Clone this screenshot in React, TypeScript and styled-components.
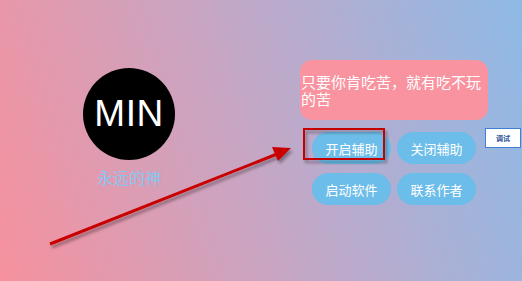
import React from 'react'
import styled, { createGlobalStyle } from 'styled-components'

const GlobalStyle = createGlobalStyle`
    html, body {
        margin: 0;
        padding: 0;
    }
    body {
        font-family: "Noto Sans CJK SC", "Liberation Sans", sans-serif;
    }
`

function App() {
    return (
        <Page>
            <GlobalStyle />
            <Profile>
                <Avatar>MIN</Avatar>
                <Name>永远的神</Name>
            </Profile>
            <Panel>
                <Quote>只要你肯吃苦，就有吃不玩的苦</Quote>
                <ButtonRow>
                    <PillButton>开启辅助</PillButton>
                    <PillButton>关闭辅助</PillButton>
                    <DebugButton>调试</DebugButton>
                </ButtonRow>
                <ButtonRow>
                    <PillButton>启动软件</PillButton>
                    <PillButton>联系作者</PillButton>
                </ButtonRow>
            </Panel>
            <Annotation viewBox="0 0 522 281">
                <g filter="url(#shade)">
                    <line x1="50" y1="244" x2="277" y2="154" stroke="#c80000" strokeWidth="3" />
                    <polygon points="291,148 278,161 272,147" fill="#c80000" />
                    <rect x="304" y="129" width="80" height="30" fill="none" stroke="#c40000" strokeWidth="2" />
                </g>
                <defs>
                    <filter id="shade" x="-10%" y="-10%" width="130%" height="140%">
                        <feDropShadow dx="2" dy="3" stdDeviation="1.5" floodColor="#000" floodOpacity="0.35" />
                    </filter>
                </defs>
            </Annotation>
        </Page>
    )
}

const Page = styled.div`
    position: relative;
    width: 522px;
    height: 281px;
    overflow: hidden;
    display: flex;
    align-items: flex-start;
    background: linear-gradient(73deg, #f6919e 0%, #c4a7c6 50%, #8ebae6 100%);
`

const Profile = styled.div`
    display: flex;
    flex-direction: column;
    align-items: center;
    width: 92px;
    margin: 68px 0 0 83px;
`

const Avatar = styled.div`
    width: 92px;
    height: 92px;
    border-radius: 50%;
    background: #000;
    color: #fff;
    display: flex;
    align-items: center;
    justify-content: center;
    font-family: "Liberation Sans", Arial, sans-serif;
    font-size: 37px;
    letter-spacing: 0.5px;
`

const Name = styled.div`
    margin-top: 7px;
    color: #88c6f0;
    font-size: 16px;
    line-height: 20px;
`

const Panel = styled.div`
    display: flex;
    flex-direction: column;
    width: 188px;
    margin: 60px 0 0 125px;
`

const Quote = styled.div`
    box-sizing: border-box;
    height: 60px;
    padding: 0 1px;
    border-radius: 12px;
    background: #f8939f;
    color: #fff;
    font-size: 15px;
    line-height: 17px;
    display: flex;
    align-items: center;
`

const ButtonRow = styled.div`
    display: flex;
    align-items: flex-start;
    gap: 6px;
    margin: 12px 0 0 12px;

    & + & {
        margin-top: 9px;
    }
`

const PillButton = styled.button`
    width: 79px;
    height: 32px;
    flex: none;
    border: none;
    border-radius: 16px;
    background: #6cbde9;
    color: #fff;
    font-family: "Noto Sans CJK SC", sans-serif;
    font-size: 13px;
    padding: 0;
`

const DebugButton = styled.button`
    flex: none;
    box-sizing: border-box;
    width: 36px;
    height: 20px;
    margin: -4px 0 0 3px;
    padding: 0;
    border: 1.5px solid #3f7fd6;
    background: #fff;
    color: #2a4f9a;
    font-family: "Noto Sans CJK SC", sans-serif;
    font-size: 7px;
    font-weight: 700;
`

const Annotation = styled.svg`
    position: absolute;
    left: 0;
    top: 0;
    width: 522px;
    height: 281px;
    pointer-events: none;
`

export default App
